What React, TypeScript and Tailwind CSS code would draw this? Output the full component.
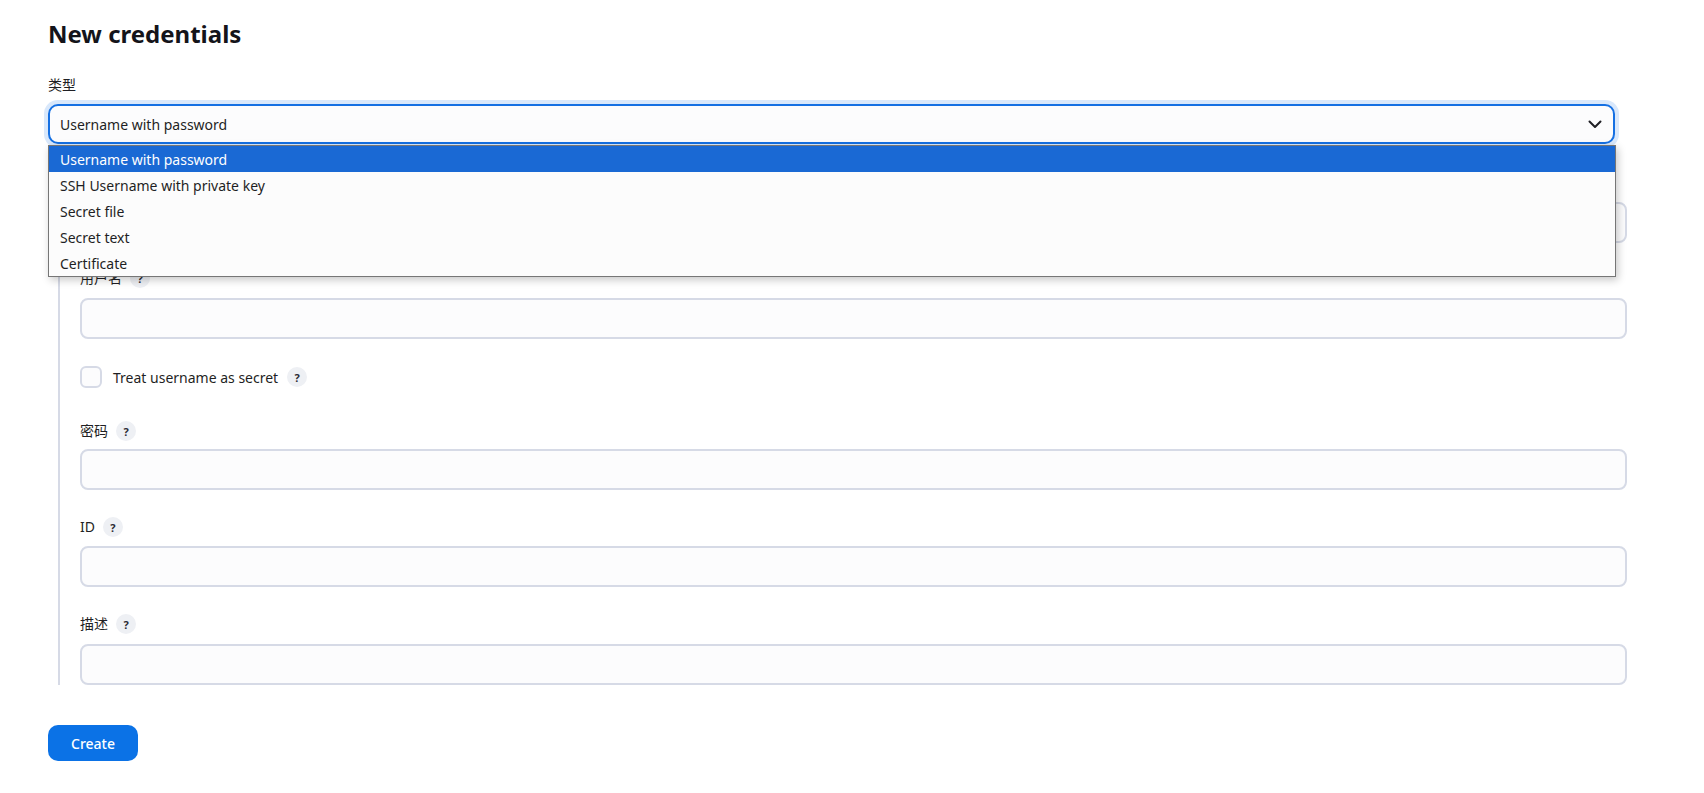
import React from "react";

const FONT = "font-['Noto_Sans','Noto_Sans_CJK_SC',sans-serif]";

function Help() {
  return (
    <span className="inline-flex h-[20px] w-[20px] items-center justify-center rounded-full bg-[#eef0f4] text-[11px] font-bold leading-none text-[#2b2b33]">
      ?
    </span>
  );
}

function Label({ text }: { text: string }) {
  return (
    <div className="flex h-[20px] items-center gap-[8px] text-[14px] leading-[20px] text-[#1f1f24]">
      <span>{text}</span>
      <Help />
    </div>
  );
}

function Input() {
  return (
    <div className="h-[41px] w-[1547px] rounded-[8px] border-2 border-[#d6dae6] bg-[#fcfcfd]" />
  );
}

const options = [
  "Username with password",
  "SSH Username with private key",
  "Secret file",
  "Secret text",
  "Certificate",
];

export default function App() {
  return (
    <div className={`min-h-[793px] w-full bg-white pl-[48px] pt-[16px] ${FONT} text-[#1f1f24]`}>
      <h1 className="h-[36px] text-[24px] font-bold leading-[36px] text-[#14141a]">
        New credentials
      </h1>
      <div className="mt-[23px] h-[20px] text-[14px] leading-[20px]">类型</div>

      <div className="relative z-10 mt-[9px] w-[1567px]">
        <div className="flex h-[40px] items-center justify-between rounded-[10px] border-2 border-[#1570e3] bg-[#fcfcfd] pl-[10px] pr-[10px] text-[14px] shadow-[0_0_0_4px_#d9e8fb]">
          <span>Username with password</span>
          <svg width="14" height="9" viewBox="0 0 14 9" fill="none" className="mr-[1px]">
            <path d="M1.5 1.5 L7 7 L12.5 1.5" stroke="#1f1f24" strokeWidth="2" strokeLinecap="round" strokeLinejoin="round" />
          </svg>
        </div>
        <div className="absolute left-0 top-[41px] w-[1568px] border border-[#767676] bg-[#fcfcfc] shadow-[2px_3px_8px_rgba(0,0,0,0.22)]">
          {options.map((o, i) => (
            <div
              key={o}
              className={`flex h-[26px] items-center pl-[11px] text-[14px] ${
                i === 0 ? "bg-[#1a69d4] text-white" : "text-[#1f1f24]"
              }`}
            >
              {o}
            </div>
          ))}
        </div>
      </div>

      <div className="ml-[10px] mt-[16px] w-[1569px] border-l-2 border-[#d6dae6] pl-[20px] pt-[12px]">
        <div className="h-[20px]" />
        <div className="mt-[10px]">
          <Input />
        </div>

        <div className="mt-[25px]">
          <Label text="用户名" />
        </div>
        <div className="mt-[10px]">
          <Input />
        </div>

        <div className="mt-[27px] flex h-[22px] items-center">
          <span className="h-[22px] w-[22px] rounded-[6px] border-2 border-[#d6dae6] bg-[#fcfcfd]" />
          <span className="ml-[11px] text-[14px]">Treat username as secret</span>
          <span className="ml-[9px] flex">
            <Help />
          </span>
        </div>

        <div className="mt-[33px]">
          <Label text="密码" />
        </div>
        <div className="mt-[8px]">
          <Input />
        </div>

        <div className="mt-[27px]">
          <Label text="ID" />
        </div>
        <div className="mt-[9px]">
          <Input />
        </div>

        <div className="mt-[27px]">
          <Label text="描述" />
        </div>
        <div className="mt-[10px]">
          <Input />
        </div>
      </div>

      <button className="mt-[40px] flex h-[36px] w-[90px] items-center justify-center rounded-[10px] bg-[#0b72e6] text-[14px] font-medium text-white">
        Create
      </button>
    </div>
  );
}
